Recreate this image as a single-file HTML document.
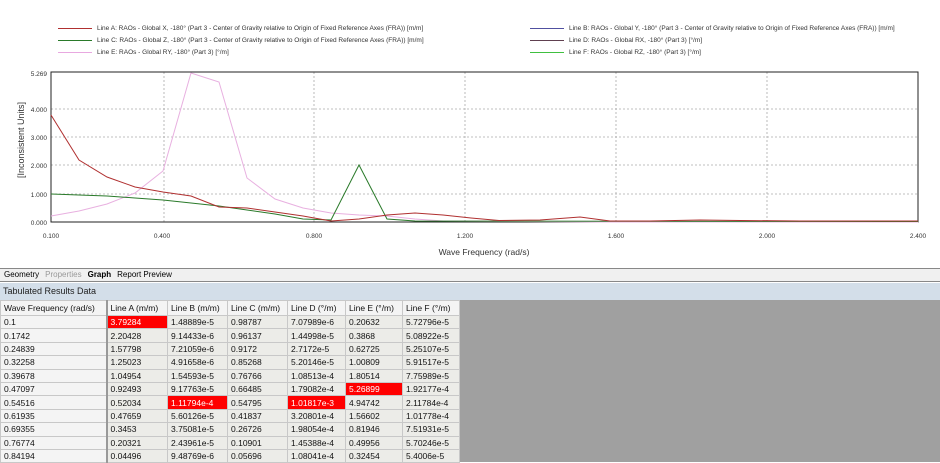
<!DOCTYPE html>
<html><head><meta charset="utf-8"><style>
body{margin:0;width:940px;height:462px;overflow:hidden;background:#fff;font-family:"Liberation Sans",sans-serif;position:relative}
.lg{position:absolute;font-size:6.5px;color:#333;white-space:nowrap}
.lg i{display:inline-block;width:34px;height:0;border-top:1px solid;vertical-align:middle;margin-right:5px}
table{position:absolute;left:0;top:300px;border-collapse:collapse;font-size:8.5px;color:#111}
td{height:12.4px;padding:0 0 0 3px;border:1px solid #c8c8c8;background:#ecece8;white-space:nowrap;line-height:12px}
td:first-child{background:#f4f4f4;border-right:2px solid #999}
tr:first-child td{background:#f4f4f4;height:14px}
.r{background:#f00!important;color:#fff}
</style></head><body>
<div class="lg" style="left:58px;top:25px"><i style="border-color:#b03030"></i>Line A: RAOs - Global X, -180° (Part 3 - Center of Gravity relative to Origin of Fixed Reference Axes (FRA)) [m/m]</div>
<div class="lg" style="left:58px;top:37px"><i style="border-color:#2a7a2a"></i>Line C: RAOs - Global Z, -180° (Part 3 - Center of Gravity relative to Origin of Fixed Reference Axes (FRA)) [m/m]</div>
<div class="lg" style="left:58px;top:49px"><i style="border-color:#e8a8e0"></i>Line E: RAOs - Global RY, -180° (Part 3) [°/m]</div>
<div class="lg" style="left:530px;top:25px"><i style="border-color:#5050a0"></i>Line B: RAOs - Global Y, -180° (Part 3 - Center of Gravity relative to Origin of Fixed Reference Axes (FRA)) [m/m]</div>
<div class="lg" style="left:530px;top:37px"><i style="border-color:#604050"></i>Line D: RAOs - Global RX, -180° (Part 3) [°/m]</div>
<div class="lg" style="left:530px;top:49px"><i style="border-color:#40c040"></i>Line F: RAOs - Global RZ, -180° (Part 3) [°/m]</div>
<svg width="940" height="268" style="position:absolute;left:0;top:0" font-family="Liberation Sans" font-size="6.5" fill="#333">
<g stroke="#aaa" stroke-dasharray="2,2" stroke-width="0.8">
<line x1="51" y1="109" x2="918" y2="109"/><line x1="51" y1="137" x2="918" y2="137"/><line x1="51" y1="165" x2="918" y2="165"/><line x1="51" y1="194" x2="918" y2="194"/>
<line x1="164" y1="72" x2="164" y2="222"/><line x1="314" y1="72" x2="314" y2="222"/><line x1="465" y1="72" x2="465" y2="222"/><line x1="616" y1="72" x2="616" y2="222"/><line x1="767" y1="72" x2="767" y2="222"/>
</g>
<rect x="51" y="72" width="867" height="150" fill="none" stroke="#222" stroke-width="1"/>
<text x="47" y="76" text-anchor="end">5.269</text><text x="47" y="112" text-anchor="end">4.000</text><text x="47" y="140" text-anchor="end">3.000</text><text x="47" y="168" text-anchor="end">2.000</text><text x="47" y="197" text-anchor="end">1.000</text><text x="47" y="225" text-anchor="end">0.000</text>
<g text-anchor="middle"><text x="51" y="238">0.100</text><text x="162" y="238">0.400</text><text x="314" y="238">0.800</text><text x="465" y="238">1.200</text><text x="616" y="238">1.600</text><text x="767" y="238">2.000</text><text x="918" y="238">2.400</text></g>
<text x="484" y="255" text-anchor="middle" font-size="8.5">Wave Frequency (rad/s)</text>
<text transform="translate(24,140) rotate(-90)" text-anchor="middle" font-size="9">[Inconsistent Units]</text>
<polyline fill="none" stroke="#e8b0e0" stroke-width="1" points="51,216 79,211 107,204 135,193 163,171 191,73 219,82 247,178 275,199 303,208 331,213 359,215 387,216 415,219 443,221 600,222 918,222"/>
<polyline fill="none" stroke="#2a7a2a" stroke-width="1" points="51,194 79,195 107,196 135,198 163,200 191,203 219,206 247,210 275,214 303,219 331,220 359,165 387,219 415,221 918,221.5"/>
<polyline fill="none" stroke="#b03030" stroke-width="1" points="51,115 79,160 107,177 135,187 163,192 191,196 219,207 247,208 275,212 303,216 331,221 359,219 387,215 415,213 443,215 471,218 499,220.5 540,220 580,217 610,221 650,221 700,220 740,220.5 800,221 918,221"/>
</svg>
<div style="position:absolute;left:0;top:268px;width:940px;height:12px;background:#f0f0f0;border-top:1px solid #888;border-bottom:1px solid #888;font-size:8px;line-height:12px">
<span style="margin-left:4px">Geometry</span><span style="color:#999;margin-left:6px">Properties</span><b style="margin-left:6px">Graph</b><span style="margin-left:6px">Report Preview</span></div>
<div style="position:absolute;left:0;top:283px;width:940px;height:17px;background:#d3dee9;font-size:9px;line-height:17px;padding-left:3px;color:#222">Tabulated Results Data</div>
<div style="position:absolute;left:459px;top:300px;width:481px;height:162px;background:#a0a0a0"></div>
<table>
<colgroup><col style="width:106px"><col style="width:61px"><col style="width:60px"><col style="width:60px"><col style="width:58px"><col style="width:57px"><col style="width:57px"></colgroup>
<tr><td>Wave Frequency (rad/s)</td><td>Line A (m/m)</td><td>Line B (m/m)</td><td>Line C (m/m)</td><td>Line D (°/m)</td><td>Line E (°/m)</td><td>Line F (°/m)</td></tr>
<tr><td>0.1</td><td class="r">3.79284</td><td>1.48889e-5</td><td>0.98787</td><td>7.07989e-6</td><td>0.20632</td><td>5.72796e-5</td></tr>
<tr><td>0.1742</td><td>2.20428</td><td>9.14433e-6</td><td>0.96137</td><td>1.44998e-5</td><td>0.3868</td><td>5.08922e-5</td></tr>
<tr><td>0.24839</td><td>1.57798</td><td>7.21059e-6</td><td>0.9172</td><td>2.7172e-5</td><td>0.62725</td><td>5.25107e-5</td></tr>
<tr><td>0.32258</td><td>1.25023</td><td>4.91658e-6</td><td>0.85268</td><td>5.20146e-5</td><td>1.00809</td><td>5.91517e-5</td></tr>
<tr><td>0.39678</td><td>1.04954</td><td>1.54593e-5</td><td>0.76766</td><td>1.08513e-4</td><td>1.80514</td><td>7.75989e-5</td></tr>
<tr><td>0.47097</td><td>0.92493</td><td>9.17763e-5</td><td>0.66485</td><td>1.79082e-4</td><td class="r">5.26899</td><td>1.92177e-4</td></tr>
<tr><td>0.54516</td><td>0.52034</td><td class="r">1.11794e-4</td><td>0.54795</td><td class="r">1.01817e-3</td><td>4.94742</td><td>2.11784e-4</td></tr>
<tr><td>0.61935</td><td>0.47659</td><td>5.60126e-5</td><td>0.41837</td><td>3.20801e-4</td><td>1.56602</td><td>1.01778e-4</td></tr>
<tr><td>0.69355</td><td>0.3453</td><td>3.75081e-5</td><td>0.26726</td><td>1.98054e-4</td><td>0.81946</td><td>7.51931e-5</td></tr>
<tr><td>0.76774</td><td>0.20321</td><td>2.43961e-5</td><td>0.10901</td><td>1.45388e-4</td><td>0.49956</td><td>5.70246e-5</td></tr>
<tr><td>0.84194</td><td>0.04496</td><td>9.48769e-6</td><td>0.05696</td><td>1.08041e-4</td><td>0.32454</td><td>5.4006e-5</td></tr>
</table>
</body></html>
